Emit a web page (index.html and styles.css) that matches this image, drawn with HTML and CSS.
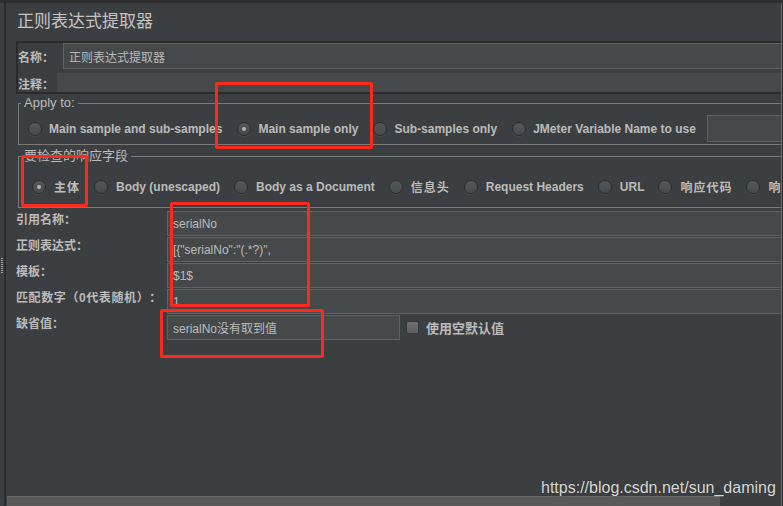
FILE: index.html
```html
<!DOCTYPE html>
<html lang="zh-CN">
<head>
    <meta charset="UTF-8">
    <title>正则表达式提取器</title>
    <link rel="stylesheet" href="styles.css">
</head>
<body>
    <div class="window">
        <div class="splitter"><span class="grip"></span></div>

        <div class="editor">
            <h1 class="title">正则表达式提取器</h1>

            <div class="name-panel">
                <div class="name-row">
                    <span class="label name-label">名称：</span>
                    <div class="field field-wide">正则表达式提取器</div>
                </div>
                <div class="comment-row">
                    <span class="label comment-label">注释：</span>
                    <div class="field field-plain"></div>
                </div>
            </div>

            <fieldset class="group apply">
                <legend>Apply to:</legend>
                <div class="radio-row">
                    <label class="radio"><span class="radio-dot"></span>Main sample and sub-samples</label>
                    <label class="radio checked"><span class="radio-dot"></span>Main sample only</label>
                    <label class="radio"><span class="radio-dot"></span>Sub-samples only</label>
                    <label class="radio"><span class="radio-dot"></span>JMeter Variable Name to use</label>
                    <div class="field field-wide var-field"></div>
                </div>
            </fieldset>

            <fieldset class="group scope">
                <legend>要检查的响应字段</legend>
                <div class="radio-row">
                    <label class="radio checked cjk"><span class="radio-dot"></span>主体</label>
                    <label class="radio"><span class="radio-dot"></span>Body (unescaped)</label>
                    <label class="radio"><span class="radio-dot"></span>Body as a Document</label>
                    <label class="radio cjk"><span class="radio-dot"></span>信息头</label>
                    <label class="radio"><span class="radio-dot"></span>Request Headers</label>
                    <label class="radio"><span class="radio-dot"></span>URL</label>
                    <label class="radio cjk"><span class="radio-dot"></span>响应代码</label>
                    <label class="radio cjk"><span class="radio-dot"></span>响应信息</label>
                </div>
            </fieldset>

            <div class="form-grid">
                <span class="label">引用名称：</span>
                <div class="field field-wide">serialNo</div>

                <span class="label">正则表达式：</span>
                <div class="field field-wide">[{"serialNo":"(.*?)",</div>

                <span class="label">模板：</span>
                <div class="field field-wide">$1$</div>

                <span class="label label-long">匹配数字（0代表随机）：</span>
                <div class="field field-wide">1</div>

                <span class="label">缺省值：</span>
                <div class="default-cell">
                    <div class="field default-field">serialNo没有取到值</div>
                    <span class="checkbox"></span>
                    <span class="checkbox-text">使用空默认值</span>
                </div>
            </div>

            <div class="hscroll"></div>
        </div>
    </div>

    <!-- red annotation boxes drawn over the screenshot -->
    <div class="mark mark-apply"></div>
    <div class="mark mark-body"></div>
    <div class="mark mark-fields"></div>
    <div class="mark mark-default"></div>

    <div class="watermark">https://blog.csdn.net/sun_daming</div>
</body>
</html>
```

FILE: styles.css
```css
* {
    box-sizing: border-box;
}
body {
    margin: 0;
    width: 783px;
    height: 506px;
    overflow: hidden;
    position: relative;
    background-color: #3c3f41;
    color: #bbbbbb;
    font-family: "Liberation Sans", "Noto Sans CJK SC", sans-serif;
    font-size: 12px;
    text-spacing-trim: space-all;
}
.window {
    display: flex;
    height: 506px;
    border-top: 3px solid #2b2d2f;
    border-right: 1px solid #2b2b2b;
}
.splitter {
    width: 6px;
    flex-shrink: 0;
    border-right: 2px solid #2b2b2b;
    display: flex;
    flex-direction: column;
}
.grip {
    margin: 255px 0 0 1px;
    width: 2px;
    height: 16px;
    background: repeating-linear-gradient(to bottom, #a0a0a0 0 1px, transparent 1px 2px);
}
.editor {
    flex: 1;
    min-width: 0;
    display: flex;
    flex-direction: column;
    overflow: hidden;
    border-right: 1px solid #6b6b6b;
}
.title {
    margin: 9px 0 0 11px;
    font-size: 17px;
    line-height: 20px;
    font-weight: normal;
    color: #c4c4c4;
}
.label {
    display: flex;
    align-items: center;
    font-weight: bold;
    white-space: nowrap;
}
.field {
    flex: 1;
    display: flex;
    align-items: center;
    padding-left: 5px;
    background-color: #45494a;
    border: 1px solid #5f6264;
    white-space: nowrap;
    overflow: hidden;
}
.field-wide {
    border-right: none;
}
.field-plain {
    border: none;
}

/* name / comment */
.name-panel {
    margin: 9px 0 0 10px;
    border: 2px solid #2b2b2b;
    border-right: none;
}
.name-row {
    display: flex;
    height: 26px;
}
.name-label {
    width: 45px;
}
.comment-row {
    display: flex;
    height: 19px;
    margin-top: 4px;
}
.comment-label {
    width: 39px;
    padding-top: 2px;
}

/* titled groups */
.group {
    margin: 2px 0 0 12px;
    padding: 5px 0 2px 2px;
    border: 1px solid #7a7a7a;
    border-right: none;
    min-width: 0;
}
.group legend {
    padding: 0 3px;
    font-size: 13px;
    line-height: 14px;
}
.scope {
    margin-top: 4px;
    padding: 10px 0 7px 2px;
}
.radio-row {
    display: flex;
    align-items: center;
    height: 27px;
    padding-left: 7px;
    white-space: nowrap;
}
.scope .radio-row {
    padding-left: 11px;
}
.radio {
    display: flex;
    align-items: center;
    gap: 7px;
    margin-right: 15px;
    flex-shrink: 0;
    font-weight: bold;
}
.scope .radio {
    gap: 8px;
    margin-right: 14px;
}
.radio.cjk {
    letter-spacing: 1px;
}
.radio-dot {
    position: relative;
    width: 14px;
    height: 14px;
    border-radius: 50%;
    background: linear-gradient(#55585b, #474a4c);
    border: 1px solid #2c2d2e;
    box-shadow: 0 1px 0 #46494b;
}
.radio.checked .radio-dot::after {
    content: "";
    position: absolute;
    left: 4px;
    top: 4px;
    width: 4px;
    height: 4px;
    border-radius: 50%;
    background-color: #b4b4b4;
}
.var-field {
    flex: 1;
    height: 27px;
    margin-left: -4px;
}

/* form rows */
.form-grid {
    margin: 3px 0 0 10px;
    display: grid;
    grid-template-columns: 151px 1fr;
    grid-auto-rows: 25px;
    row-gap: 1px;
}
.form-grid .label {
    align-items: flex-start;
    padding-top: 2px;
    line-height: 14px;
}
.form-grid .label-long {
    letter-spacing: 0.6px;
}
.default-cell {
    display: flex;
    align-items: center;
}
.default-field {
    flex: none;
    width: 233px;
    height: 25px;
}
.checkbox {
    width: 13px;
    height: 13px;
    margin-left: 6px;
    border-radius: 2px;
    background: linear-gradient(#6f6f6f, #5d5d5d);
    border: 1px solid #353637;
}
.checkbox-text {
    margin-left: 7px;
    font-size: 13px;
    font-weight: bold;
}

.hscroll {
    margin: auto 0 0 1px;
    width: 713px;
    height: 10px;
    background-color: #59595a;
    border-top: 1px solid #666666;
}

/* annotations */
.mark {
    position: absolute;
    border: 3px solid #fb2a1c;
    border-radius: 2px;
}
.mark-apply {
    left: 215px;
    top: 82px;
    width: 158px;
    height: 67px;
}
.mark-body {
    left: 21px;
    top: 155px;
    width: 67px;
    height: 52px;
}
.mark-fields {
    left: 170px;
    top: 202px;
    width: 140px;
    height: 105px;
}
.mark-default {
    left: 160px;
    top: 309px;
    width: 164px;
    height: 49px;
}
.watermark {
    position: absolute;
    left: 541px;
    top: 480px;
    font-size: 16px;
    line-height: 16px;
    color: #d8d8d8;
    text-shadow: 0 0 1px #2a2a2a;
}
```
